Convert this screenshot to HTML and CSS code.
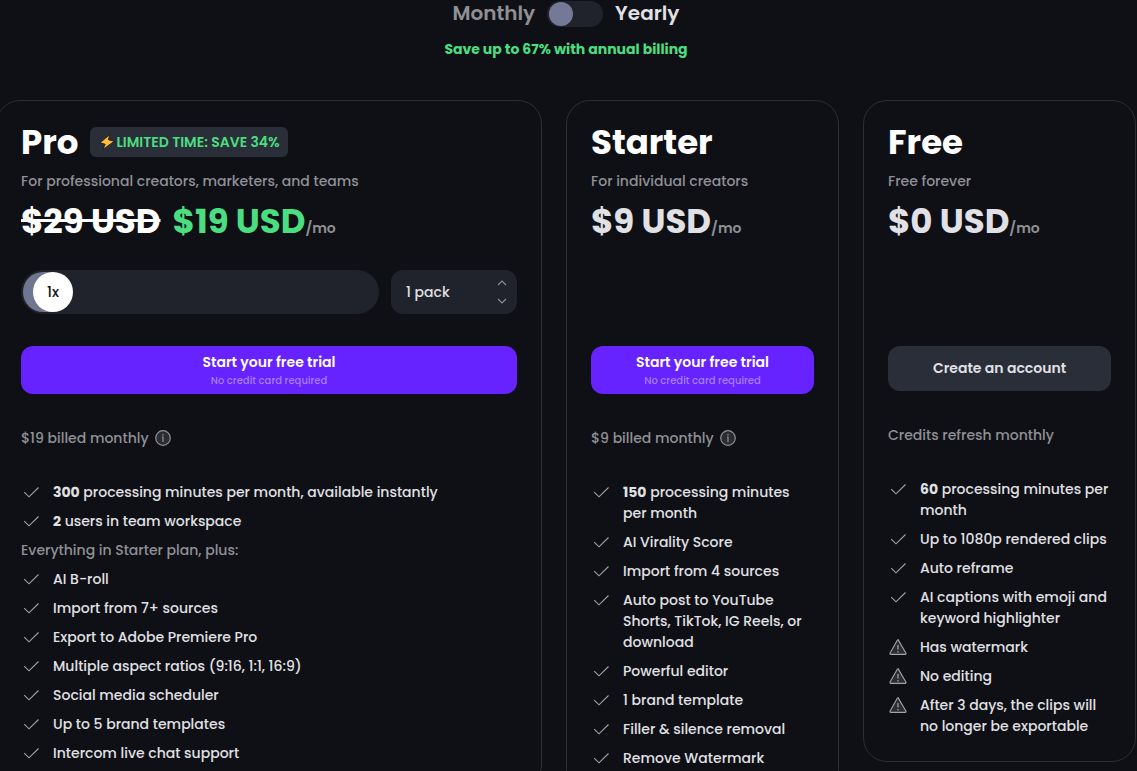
FILE: index.html
```html
<!DOCTYPE html>
<html lang="en">
  <head>
    <meta charset="UTF-8" />
    <meta name="viewport" content="width=device-width, initial-scale=1.0" />
    <title>Pricing</title>
    <link rel="stylesheet" href="styles.css">
  </head>
  <body>
    <!-- Shared icons -->
    <svg class="sprite" aria-hidden="true">
      <symbol id="check" viewBox="0 0 20 20">
        <path d="M3.2 10.2 8 14.8 17.5 5.5" fill="none" stroke="currentColor" stroke-width="1.1" />
      </symbol>
      <symbol id="warning" viewBox="0 0 20 20">
        <path d="M10 2.6 18 16.2Q18.3 17.3 17.2 17.4H2.8Q1.7 17.3 2 16.2L9.3 3.2Q10 2.2 10.7 3.2Z" fill="#2b2d32" stroke="currentColor" stroke-width="1.1" />
        <path d="M10 8v4.5M10 14v1.5" fill="none" stroke="currentColor" stroke-width="1.2" />
      </symbol>
      <symbol id="info" viewBox="0 0 16 16">
        <circle cx="8" cy="8" r="7.3" fill="#2b2d32" stroke="currentColor" stroke-width="1.2" />
        <path d="M7 7h1v5M8 4v1.4" fill="none" stroke="currentColor" stroke-width="1.2" />
      </symbol>
    </svg>

    <main class="pricing">
      <div class="billing">
        <label class="billing-label muted" for="billing-toggle">Monthly</label>
        <input class="toggle" type="checkbox" role="switch" id="billing-toggle" />
        <label class="billing-label" for="billing-toggle">Yearly</label>
      </div>
      <p class="saving">Save up to 67% with annual billing</p>

      <div class="plans">
        <section class="card">
          <div class="card-head">
            <h2>Pro</h2>
            <span class="badge">
              <svg class="bolt" viewBox="0 0 16 16" aria-hidden="true">
                <path d="M10.6 0.8 1 8.8 6.2 10.2 4 15.4 15.2 7.2 9.4 5.8Z" fill="#fdbd3c" stroke="#17130c" stroke-width="0.8" stroke-linejoin="round" />
              </svg>LIMITED TIME: SAVE 34%</span>
          </div>
          <p class="desc">For professional creators, marketers, and teams</p>
          <p class="price"><s>$29 USD</s><span class="sale">$19 USD</span><span class="per">/mo</span></p>
          <div class="options">
            <div class="slider">
              <input type="range" id="packs" min="1" max="10" value="1" aria-label="Packs" />
              <output for="packs">1x</output>
            </div>
            <div class="pack">
              <select aria-label="Number of packs">
                <option>1 pack</option>
                <option>2 packs</option>
                <option>3 packs</option>
              </select>
              <svg viewBox="0 0 10 26" aria-hidden="true">
                <path d="M1 6l4-4 4 4M1 20l4 4 4-4" fill="none" stroke="#8b8d94" stroke-width="1.2" />
              </svg>
            </div>
          </div>
          <button class="btn primary">Start your free trial<small>No credit card required</small></button>
          <p class="billed">$19 billed monthly <svg><use href="#info" /></svg></p>
          <ul class="features">
            <li><svg><use href="#check" /></svg><span><b>300</b> processing minutes per month, available instantly</span></li>
            <li><svg><use href="#check" /></svg><span><b>2</b> users in team workspace</span></li>
            <li class="note">Everything in Starter plan, plus:</li>
            <li><svg><use href="#check" /></svg><span>AI B-roll</span></li>
            <li><svg><use href="#check" /></svg><span>Import from 7+ sources</span></li>
            <li><svg><use href="#check" /></svg><span>Export to Adobe Premiere Pro</span></li>
            <li><svg><use href="#check" /></svg><span>Multiple aspect ratios (9:16, 1:1, 16:9)</span></li>
            <li><svg><use href="#check" /></svg><span>Social media scheduler</span></li>
            <li><svg><use href="#check" /></svg><span>Up to 5 brand templates</span></li>
            <li><svg><use href="#check" /></svg><span>Intercom live chat support</span></li>
          </ul>
        </section>

        <section class="card">
          <div class="card-head">
            <h2>Starter</h2>
          </div>
          <p class="desc">For individual creators</p>
          <p class="price">$9 USD<span class="per">/mo</span></p>
          <div class="options"></div>
          <button class="btn primary">Start your free trial<small>No credit card required</small></button>
          <p class="billed">$9 billed monthly <svg><use href="#info" /></svg></p>
          <ul class="features">
            <li><svg><use href="#check" /></svg><span><b>150</b> processing minutes per month</span></li>
            <li><svg><use href="#check" /></svg><span>AI Virality Score</span></li>
            <li><svg><use href="#check" /></svg><span>Import from 4 sources</span></li>
            <li><svg><use href="#check" /></svg><span>Auto post to YouTube Shorts, TikTok, IG Reels, or download</span></li>
            <li><svg><use href="#check" /></svg><span>Powerful editor</span></li>
            <li><svg><use href="#check" /></svg><span>1 brand template</span></li>
            <li><svg><use href="#check" /></svg><span>Filler &amp; silence removal</span></li>
            <li><svg><use href="#check" /></svg><span>Remove Watermark</span></li>
          </ul>
        </section>

        <section class="card">
          <div class="card-head">
            <h2>Free</h2>
          </div>
          <p class="desc">Free forever</p>
          <p class="price">$0 USD<span class="per">/mo</span></p>
          <div class="options"></div>
          <button class="btn secondary">Create an account</button>
          <p class="billed">Credits refresh monthly</p>
          <ul class="features">
            <li><svg><use href="#check" /></svg><span><b>60</b> processing minutes per month</span></li>
            <li><svg><use href="#check" /></svg><span>Up to 1080p rendered clips</span></li>
            <li><svg><use href="#check" /></svg><span>Auto reframe</span></li>
            <li><svg><use href="#check" /></svg><span>AI captions with emoji and keyword highlighter</span></li>
            <li><svg><use href="#warning" /></svg><span>Has watermark</span></li>
            <li><svg><use href="#warning" /></svg><span>No editing</span></li>
            <li><svg><use href="#warning" /></svg><span>After 3 days, the clips will no longer be exportable</span></li>
          </ul>
        </section>
      </div>
    </main>
  </body>
</html>
```

FILE: styles.css
```css
* {
  box-sizing: border-box;
}
body {
  margin: 0;
  height: 100vh;
  overflow: hidden;
  background-color: #0f1015;
  color: #e0e0e5;
  font-family: Poppins, Inter, sans-serif;
  font-size: 14px;
  font-weight: 500;
  line-height: 21px;
}
h2,
p,
ul {
  margin: 0;
  padding: 0;
}
.sprite {
  display: none;
}
.pricing {
  margin: 0 1px 0 -4px;
}
.billing {
  display: flex;
  justify-content: center;
  align-items: center;
  gap: 12px;
  height: 27px;
}
.billing-label {
  font-size: 20px;
  font-weight: 600;
}
.muted {
  color: #8f9095;
}
.toggle {
  appearance: none;
  width: 56px;
  height: 26px;
  margin: 0;
  padding: 1px 2px;
  border-radius: 13px;
  background-color: #20232b;
}
.toggle::before {
  content: "";
  display: block;
  width: 24px;
  height: 24px;
  border-radius: 50%;
  background-color: #747997;
}
.toggle:checked::before {
  margin-left: auto;
}
.saving {
  margin-top: 12px;
  text-align: center;
  font-weight: 700;
  color: #4ade80;
}
.plans {
  display: grid;
  grid-template-columns: minmax(0, 2fr) minmax(0, 1fr) minmax(0, 1fr);
  align-items: start;
  gap: 24px;
  margin-top: 40px;
}
.card {
  padding: 24px;
  border: 1px solid #2c2e33;
  border-radius: 24px;
}
.card-head {
  display: flex;
  align-items: center;
  gap: 12px;
  height: 34px;
}
h2 {
  font-size: 34px;
  font-weight: 700;
  line-height: 34px;
  color: #ffffff;
}
.badge {
  display: flex;
  align-items: center;
  height: 30px;
  padding: 0 8px;
  border-radius: 6px;
  background-color: #2a2e38;
  color: #4ade80;
  font-weight: 600;
}
.bolt {
  width: 18px;
  height: 16px;
}
.desc {
  margin-top: 12px;
  color: #8f9095;
}
.price {
  margin-top: 8px;
  font-size: 34px;
  font-weight: 700;
  line-height: 42px;
}
.price s {
  margin-right: 12px;
  color: #ffffff;
}
.sale {
  color: #4ade80;
}
.per {
  color: #8f9095;
  font-size: 14px;
  font-weight: 600;
  line-height: 20px;
}
.options {
  display: flex;
  gap: 12px;
  height: 44px;
  margin: 28px 0 32px;
}
.slider {
  position: relative;
  flex: 1;
}
.slider input {
  appearance: none;
  display: block;
  width: 100%;
  height: 44px;
  margin: 0;
  padding: 2px;
  border-radius: 22px;
  background-color: #20232b;
}
.slider input::-webkit-slider-runnable-track {
  height: 40px;
  border-radius: 20px;
  background: linear-gradient(90deg, #707590 30px, transparent 30px);
}
.slider input::-webkit-slider-thumb {
  appearance: none;
  width: 40px;
  height: 40px;
  margin-left: 10px;
  border-radius: 50%;
  background-color: #ffffff;
}
/* value label sits on the thumb */
.slider output {
  position: absolute;
  top: 2px;
  left: 12px;
  width: 40px;
  line-height: 40px;
  text-align: center;
  color: #0f1015;
  pointer-events: none;
}
.pack {
  position: relative;
  width: 126px;
}
.pack select {
  appearance: none;
  width: 100%;
  height: 44px;
  padding: 0 15px;
  border: none;
  border-radius: 12px;
  background-color: #20232b;
  color: #e0e0e5;
  font: inherit;
}
.pack svg {
  position: absolute;
  top: 9px;
  right: 10px;
  width: 10px;
  height: 26px;
  pointer-events: none;
}
.btn {
  display: block;
  width: 100%;
  border: none;
  border-radius: 12px;
  font: inherit;
  font-weight: 600;
  cursor: pointer;
}
.primary {
  height: 48px;
  background-color: #6622ff;
  color: #ffffff;
}
.primary small {
  display: block;
  font-size: 10px;
  font-weight: 500;
  line-height: 16px;
  color: #a87fff;
}
.secondary {
  height: 45px;
  background-color: #2a2e38;
  color: #e0e0e5;
}
.billed {
  display: flex;
  align-items: center;
  gap: 6px;
  height: 24px;
  margin: 32px 0;
  color: #8f9095;
}
.billed svg {
  width: 16px;
  height: 16px;
}
.features {
  display: flex;
  flex-direction: column;
  gap: 8px;
  list-style: none;
}
.features li {
  display: flex;
  gap: 12px;
}
.features svg {
  flex: none;
  width: 20px;
  height: 20px;
  color: #a3a4a9;
}
.features b {
  font-weight: 700;
}
.features .note {
  color: #8f9095;
}
```
